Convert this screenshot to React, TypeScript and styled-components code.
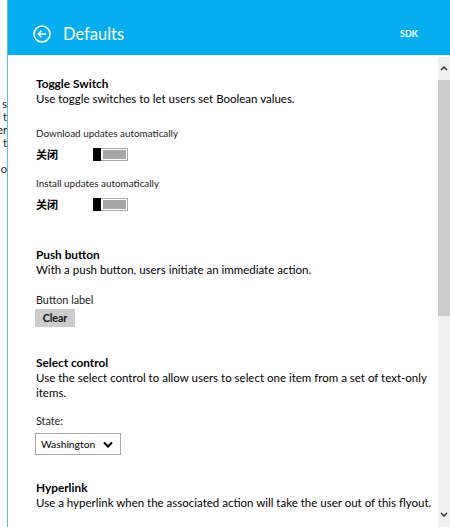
import React from "react";
import styled, { createGlobalStyle } from "styled-components";

const cyan = "#05aeef";
const font = `Lato, "Segoe UI", "Noto Sans", "Noto Sans CJK SC", sans-serif`;

const GlobalStyle = createGlobalStyle`
  html, body {
    margin: 0;
    padding: 0;
    width: 450px;
    height: 527px;
    overflow: hidden;
    background: #fff;
    font-family: ${font};
    color: #000;
  }
`;

const Page = styled.div`
  display: flex;
  width: 450px;
  height: 527px;
`;

const BehindStrip = styled.div`
  width: 7px;
  overflow: hidden;
  padding-top: 97px;
  display: flex;
  flex-direction: column;
`;

const BehindLine = styled.div`
  display: flex;
  justify-content: flex-end;
  white-space: nowrap;
  font-size: 11px;
  line-height: 13px;
  height: 13px;
  color: #222;
`;

const Flyout = styled.div`
  flex: 1;
  display: flex;
  flex-direction: column;
  border-left: 1px solid #4fc3ec;
  min-width: 0;
`;

const Header = styled.header`
  height: 55px;
  background: ${cyan};
  display: flex;
  align-items: center;
  padding: 12px 32px 0 25px;
  box-sizing: border-box;
  color: #fff;
`;

const BackButton = styled.svg`
  width: 18px;
  height: 18px;
  flex: none;
`;

const Title = styled.h1`
  margin: 0 0 0 12px;
  font-size: 16.5px;
  font-weight: 400;
  flex: 1;
`;

const Sdk = styled.span`
  font-size: 9px;
  font-weight: 700;
`;

const Body = styled.div`
  flex: 1;
  display: flex;
  min-height: 0;
`;

const Content = styled.main`
  flex: 1;
  padding: 21px 0 0 28px;
`;

const Section = styled.section<{ $gap: number }>`
  margin-bottom: ${(p) => p.$gap}px;
`;

const SectionTitle = styled.h2`
  margin: 0;
  font-size: 11.8px;
  line-height: 15px;
  font-weight: 700;
`;

const Description = styled.p`
  margin: 0;
  font-size: 11.5px;
  line-height: 15px;
  max-width: 401px;
`;

const FieldLabel = styled.div<{ $top: number; $small?: boolean }>`
  margin-top: ${(p) => p.$top}px;
  font-size: ${(p) => (p.$small ? 9.9 : 10.8)}px;
  line-height: 14px;
  color: #222;
`;

const ToggleRow = styled.div`
  display: flex;
  align-items: center;
  margin-top: 7px;
  height: 14px;
`;

const ToggleState = styled.span`
  width: 57px;
  font-size: 11px;
  font-weight: 700;
`;

const ToggleTrack = styled.div`
  position: relative;
  width: 35px;
  height: 13px;
  box-sizing: border-box;
  border: 1px solid #a9a9a9;
  padding: 1px 1px 1px 9px;
  background: #fff;
`;

const ToggleFill = styled.div`
  height: 100%;
  background: #a6a6a6;
`;

const ToggleThumb = styled.div`
  position: absolute;
  left: -1px;
  top: -1px;
  width: 8px;
  height: 13px;
  background: #000;
`;

const ClearButton = styled.button`
  display: block;
  margin: 2px 0 0 -1px;
  width: 40px;
  height: 18px;
  border: none;
  background: #cccccc;
  font-family: ${font};
  font-size: 10.6px;
  font-weight: 700;
  padding: 0;
  color: #111;
`;

const Select = styled.div`
  margin: 5px 0 0 -1px;
  width: 86px;
  height: 22px;
  box-sizing: border-box;
  border: 1px solid #a9a9a9;
  display: flex;
  align-items: center;
  justify-content: space-between;
  padding: 0 7px 0 5px;
  font-size: 10.3px;
`;

const Scrollbar = styled.div`
  width: 12px;
  margin-top: 2px;
  background: #f0f0f0;
  display: flex;
  flex-direction: column;
  align-items: center;
`;

const ScrollArrow = styled.svg`
  width: 8px;
  height: 6px;
  margin: 8px 0 9px;
  flex: none;
`;

const Thumb = styled.div`
  width: 12px;
  height: 236px;
  background: #cdcdcd;
`;

const Spacer = styled.div`
  flex: 1;
`;

const behind = ["s", "t", "er", "s t", "", "o"];

function Toggle() {
  return (
    <ToggleRow>
      <ToggleState>关闭</ToggleState>
      <ToggleTrack>
        <ToggleFill />
        <ToggleThumb />
      </ToggleTrack>
    </ToggleRow>
  );
}

export default function App() {
  return (
    <Page>
      <GlobalStyle />
      <BehindStrip>
        {behind.map((t, i) => (
          <BehindLine key={i}>{t}</BehindLine>
        ))}
      </BehindStrip>
      <Flyout>
        <Header>
          <BackButton viewBox="0 0 18 18">
            <circle cx="9" cy="9" r="8" fill="none" stroke="#fff" strokeWidth="1.6" />
            <path d="M13 9H5.5M8.5 5.8L5.3 9l3.2 3.2" fill="none" stroke="#fff" strokeWidth="1.6" />
          </BackButton>
          <Title>Defaults</Title>
          <Sdk>SDK</Sdk>
        </Header>
        <Body>
          <Content>
            <Section $gap={36}>
              <SectionTitle>Toggle Switch</SectionTitle>
              <Description>Use toggle switches to let users set Boolean values.</Description>
              <FieldLabel $top={20} $small>
                Download updates automatically
              </FieldLabel>
              <Toggle />
              <FieldLabel $top={15} $small>
                Install updates automatically
              </FieldLabel>
              <Toggle />
            </Section>
            <Section $gap={28}>
              <SectionTitle>Push button</SectionTitle>
              <Description>With a push button, users initiate an immediate action.</Description>
              <FieldLabel $top={16}>Button label</FieldLabel>
              <ClearButton>Clear</ClearButton>
            </Section>
            <Section $gap={25}>
              <SectionTitle>Select control</SectionTitle>
              <Description>
                Use the select control to allow users to select one item from a set of text-only
                items.
              </Description>
              <FieldLabel $top={14}>State:</FieldLabel>
              <Select>
                <span>Washington</span>
                <svg width="10" height="7" viewBox="0 0 10 7">
                  <path d="M1 1.5l4 4 4-4" fill="none" stroke="#000" strokeWidth="2" />
                </svg>
              </Select>
            </Section>
            <Section $gap={0}>
              <SectionTitle>Hyperlink</SectionTitle>
              <Description>
                Use a hyperlink when the associated action will take the user out of this flyout.
              </Description>
            </Section>
          </Content>
          <Scrollbar>
            <ScrollArrow viewBox="0 0 8 6">
              <path d="M1 5l3-3 3 3" fill="none" stroke="#333" strokeWidth="1.5" />
            </ScrollArrow>
            <Thumb />
            <Spacer />
            <ScrollArrow viewBox="0 0 8 6">
              <path d="M1 1l3 3 3-3" fill="none" stroke="#333" strokeWidth="1.5" />
            </ScrollArrow>
          </Scrollbar>
        </Body>
      </Flyout>
    </Page>
  );
}
